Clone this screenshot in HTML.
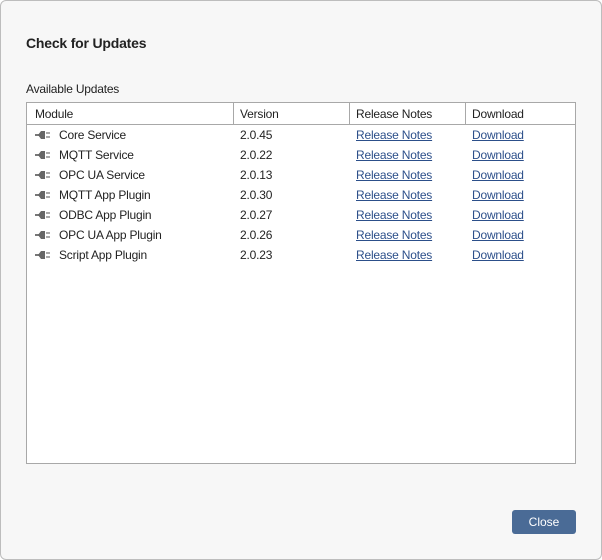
<html><head><style>
body{margin:0;width:602px;height:560px;font-family:"Liberation Sans",sans-serif;font-size:12px;color:#222;}
.win{position:absolute;left:0;top:0;width:600px;height:558px;border:1px solid #bdbdbd;border-radius:6px;background:#f7f7f7;overflow:hidden}
.t{position:absolute;left:25px;top:34px;font-size:14px;font-weight:bold;color:#222;letter-spacing:-0.2px}
.l{position:absolute;left:25px;top:81px;font-size:12px;letter-spacing:-0.2px}
.box{position:absolute;left:25px;top:101px;width:548px;height:360px;border:1px solid #a8a8a8;background:#fff;letter-spacing:-0.2px}
.hd{position:absolute;top:0;height:21px;border-bottom:1px solid #a8a8a8;width:548px;background:#fff}
.hc{position:absolute;top:4px}
.vl{position:absolute;top:0;width:1px;height:21px;background:#a8a8a8}
.row{position:absolute;left:0;height:20px;width:548px}
.row span{position:absolute;top:3px}
a{color:#2c4f8a;text-decoration:underline}
.btn{position:absolute;left:511px;top:509px;width:64px;height:24px;background:#4a6b96;border-radius:3px;color:#fff;text-align:center;line-height:24px;font-size:12px}
</style></head><body><div class="win">
<div class="t">Check for Updates</div>
<div class="l">Available Updates</div>
<div class="box">
<div class="hd"><span class="hc" style="left:8px">Module</span><div class="vl" style="left:206px"></div><span class="hc" style="left:213px">Version</span><div class="vl" style="left:322px"></div><span class="hc" style="left:329px">Release Notes</span><div class="vl" style="left:438px"></div><span class="hc" style="left:445px">Download</span></div>
<div style="position:absolute;top:22px;left:0">
<div class="row" style="top:0"><svg style="position:absolute;left:8px;top:5px" width="16" height="10"><rect x="0" y="4" width="4" height="2" fill="#777"/><path d="M3 5 L6 1 H10 V9 H6 Z" fill="#666"/><rect x="11" y="2" width="4" height="2" fill="#aaa"/><rect x="11" y="6" width="4" height="2" fill="#aaa"/></svg><span style="left:32px">Core Service</span><span style="left:213px">2.0.45</span><span style="left:329px"><a>Release Notes</a></span><span style="left:445px"><a>Download</a></span></div>
<div class="row" style="top:20px"><svg style="position:absolute;left:8px;top:5px" width="16" height="10"><rect x="0" y="4" width="4" height="2" fill="#777"/><path d="M3 5 L6 1 H10 V9 H6 Z" fill="#666"/><rect x="11" y="2" width="4" height="2" fill="#aaa"/><rect x="11" y="6" width="4" height="2" fill="#aaa"/></svg><span style="left:32px">MQTT Service</span><span style="left:213px">2.0.22</span><span style="left:329px"><a>Release Notes</a></span><span style="left:445px"><a>Download</a></span></div>
<div class="row" style="top:40px"><svg style="position:absolute;left:8px;top:5px" width="16" height="10"><rect x="0" y="4" width="4" height="2" fill="#777"/><path d="M3 5 L6 1 H10 V9 H6 Z" fill="#666"/><rect x="11" y="2" width="4" height="2" fill="#aaa"/><rect x="11" y="6" width="4" height="2" fill="#aaa"/></svg><span style="left:32px">OPC UA Service</span><span style="left:213px">2.0.13</span><span style="left:329px"><a>Release Notes</a></span><span style="left:445px"><a>Download</a></span></div>
<div class="row" style="top:60px"><svg style="position:absolute;left:8px;top:5px" width="16" height="10"><rect x="0" y="4" width="4" height="2" fill="#777"/><path d="M3 5 L6 1 H10 V9 H6 Z" fill="#666"/><rect x="11" y="2" width="4" height="2" fill="#aaa"/><rect x="11" y="6" width="4" height="2" fill="#aaa"/></svg><span style="left:32px">MQTT App Plugin</span><span style="left:213px">2.0.30</span><span style="left:329px"><a>Release Notes</a></span><span style="left:445px"><a>Download</a></span></div>
<div class="row" style="top:80px"><svg style="position:absolute;left:8px;top:5px" width="16" height="10"><rect x="0" y="4" width="4" height="2" fill="#777"/><path d="M3 5 L6 1 H10 V9 H6 Z" fill="#666"/><rect x="11" y="2" width="4" height="2" fill="#aaa"/><rect x="11" y="6" width="4" height="2" fill="#aaa"/></svg><span style="left:32px">ODBC App Plugin</span><span style="left:213px">2.0.27</span><span style="left:329px"><a>Release Notes</a></span><span style="left:445px"><a>Download</a></span></div>
<div class="row" style="top:100px"><svg style="position:absolute;left:8px;top:5px" width="16" height="10"><rect x="0" y="4" width="4" height="2" fill="#777"/><path d="M3 5 L6 1 H10 V9 H6 Z" fill="#666"/><rect x="11" y="2" width="4" height="2" fill="#aaa"/><rect x="11" y="6" width="4" height="2" fill="#aaa"/></svg><span style="left:32px">OPC UA App Plugin</span><span style="left:213px">2.0.26</span><span style="left:329px"><a>Release Notes</a></span><span style="left:445px"><a>Download</a></span></div>
<div class="row" style="top:120px"><svg style="position:absolute;left:8px;top:5px" width="16" height="10"><rect x="0" y="4" width="4" height="2" fill="#777"/><path d="M3 5 L6 1 H10 V9 H6 Z" fill="#666"/><rect x="11" y="2" width="4" height="2" fill="#aaa"/><rect x="11" y="6" width="4" height="2" fill="#aaa"/></svg><span style="left:32px">Script App Plugin</span><span style="left:213px">2.0.23</span><span style="left:329px"><a>Release Notes</a></span><span style="left:445px"><a>Download</a></span></div>
</div></div>
<div class="btn">Close</div>
</div></body></html>
